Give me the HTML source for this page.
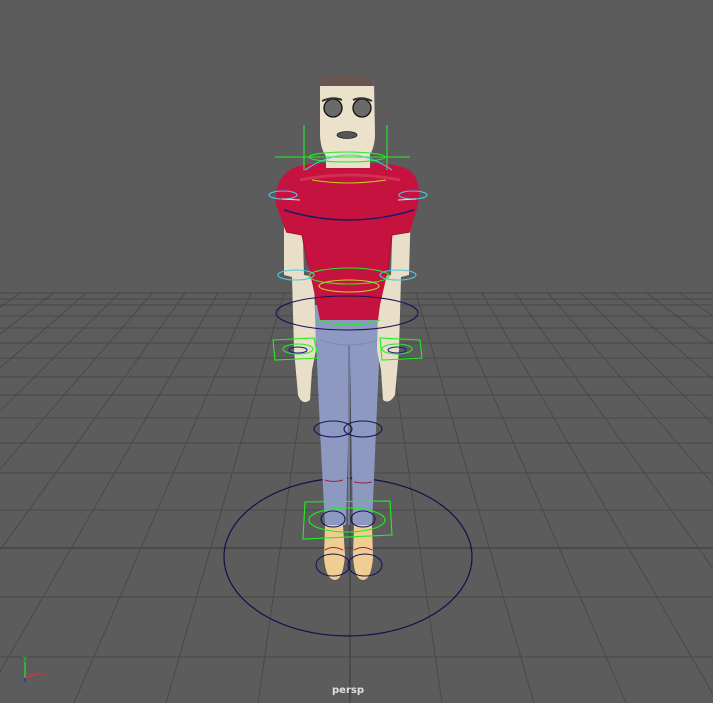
<!DOCTYPE html>
<html><head><meta charset="utf-8"><style>
html,body{margin:0;padding:0;background:#5c5c5c;width:713px;height:703px;overflow:hidden}
svg{display:block}
</style></head><body>
<svg width="713" height="703" viewBox="0 0 713 703" xmlns="http://www.w3.org/2000/svg">
<rect width="713" height="703" fill="#5c5c5c"/>
<defs><clipPath id="floor"><rect x="0" y="292" width="713" height="411"/></clipPath></defs>
<g clip-path="url(#floor)" stroke="#474747" stroke-width="0.9" fill="none">
<path d="M0 293H713M0 299H713M0 305H713M0 316H713M0 328H713M0 343H713M0 358H713M0 377H713M0 395H713M0 418H713M0 443H713M0 473H713M0 510H713M0 597H713M0 657H713"/>
<path d="M0 548H713" stroke="#404040" stroke-width="1.2"/>
<g>
<path d="M350 64L-662 703M350 64L-570 703M350 64L-478 703M350 64L-386 703M350 64L-294 703M350 64L-202 703M350 64L-110 703M350 64L-18 703M350 64L74 703M350 64L166 703M350 64L258 703"/>
<path d="M350 64L442 703M350 64L534 703M350 64L626 703M350 64L718 703M350 64L810 703M350 64L902 703M350 64L994 703M350 64L1086 703M350 64L1178 703M350 64L1270 703M350 64L1362 703"/>
<path d="M350 292V703" stroke="#404040" stroke-width="1.2"/>
</g>
</g>

<ellipse cx="348" cy="557" rx="124" ry="79" fill="none" stroke="#10104e" stroke-width="1.2"/>

<path d="M312 305 L383 305 L380 340 L376 430 L372 525 L353 525 L350 360 L346 525 L325 525 L320 430 L316 340 Z" fill="#8e99c2"/>
<path d="M349 345 V525" stroke="#6f7aa0" stroke-width="2"/>
<path d="M320 340 Q349 350 378 340" stroke="#7d88b0" fill="none"/>
<path d="M325 525 h18 l2 30 q-2 25 -10 25 q-9 0 -11 -22 z" fill="#f0cd93"/>
<path d="M354 525 h18 l1 33 q-2 22 -10 22 q-9 0 -10 -25 z" fill="#f0cd93"/>

<path d="M284 205 h18 l2 70 l10 2 l2 73 l-4 20 l-2 30 q-8 6 -12 -5 l-4 -45 l-2 -73 l-8 -2 z" fill="#e9dfc8"/>
<path d="M393 205 h18 l-2 70 l-8 2 l-2 73 l-4 45 q-6 10 -12 5 l-2 -30 l-4 -20 l2 -73 l12 -2 z" fill="#e9dfc8"/>

<path d="M290 170 Q300 163 330 163 L370 163 Q400 163 412 172 Q422 185 418 205 L410 232 L392 235 L388 270 L380 305 L378 320 L320 320 L316 300 L308 265 L302 235 L286 232 L276 205 Q274 180 290 170 Z" fill="#c5123f"/>
<path d="M286 232 L302 235 L308 265 M410 232 L392 235 L388 270" stroke="#a50e35" fill="none"/>
<path d="M300 180 Q349 170 400 180" stroke="#e24a6a" stroke-width="3" fill="none" opacity="0.5"/>

<rect x="326" y="150" width="44" height="18" fill="#e9dfc8"/>
<path d="M320 82 Q322 77 347 76 Q373 77 374 82 L375 135 Q374 165 347 166 Q321 165 320 135 Z" fill="#ece2cb"/>
<path d="M320 82 Q322 76 347 75 Q373 76 374 82 L374 86 L320 86 Z" fill="#6a5650"/>
<circle cx="333" cy="108" r="9" fill="#6a6a6a" stroke="#111" stroke-width="1.3"/>
<circle cx="362" cy="108" r="9" fill="#6a6a6a" stroke="#111" stroke-width="1.3"/>
<path d="M322 101 Q333 96 342 100 M353 100 Q362 96 372 101" stroke="#333" stroke-width="2" fill="none"/>
<ellipse cx="347" cy="135" rx="10" ry="3.5" fill="#555" stroke="#222" stroke-width="0.8"/>

<g fill="none" stroke-width="1.1">
<path d="M304 125V170M387 125V170M275 157H410" stroke="#22ee22"/>
<ellipse cx="347" cy="157" rx="38" ry="5" stroke="#22ee22"/>
<path d="M305 170 Q349 140 392 170" stroke="#3ad0e0"/>
<ellipse cx="283" cy="195" rx="14" ry="4" stroke="#49c8e8"/>
<ellipse cx="413" cy="195" rx="14" ry="4" stroke="#49c8e8"/>
<path d="M282 199 L300 200 M398 200 L416 199" stroke="#e0e0ff"/>
<path d="M284 210 Q349 230 414 210" stroke="#1a1a6a" stroke-width="1.5"/>
<path d="M312 180 Q349 186 386 180" stroke="#c8c820"/>
<ellipse cx="296" cy="275" rx="18" ry="5" stroke="#49c8e8"/>
<ellipse cx="398" cy="275" rx="18" ry="5" stroke="#49c8e8"/>
<ellipse cx="349" cy="276" rx="40" ry="8" stroke="#22ee22"/>
<ellipse cx="349" cy="286" rx="30" ry="6" stroke="#c8d820"/>
<ellipse cx="347" cy="313" rx="71" ry="17" stroke="#14145a"/>
<path d="M318 320 Q349 330 380 320" stroke="#22ee22"/>
<path d="M273 340 L314 338 L318 358 L275 360 Z M380 338 L420 340 L422 358 L382 360 Z" stroke="#22ee22"/>
<ellipse cx="298" cy="349" rx="15" ry="5" stroke="#22ee22"/>
<ellipse cx="397" cy="349" rx="15" ry="5" stroke="#22ee22"/>
<ellipse cx="298" cy="350" rx="9" ry="3" stroke="#1a1a8a"/>
<ellipse cx="397" cy="350" rx="9" ry="3" stroke="#1a1a8a"/>
<ellipse cx="333" cy="429" rx="19" ry="8" stroke="#14145a"/>
<ellipse cx="363" cy="429" rx="19" ry="8" stroke="#14145a"/>
<path d="M305 502 L390 501 L392 535 L303 539 Z" stroke="#22ee22"/>
<ellipse cx="347" cy="520" rx="38" ry="12" stroke="#22ee22"/>
<ellipse cx="333" cy="519" rx="12" ry="8" stroke="#14145a"/>
<ellipse cx="363" cy="519" rx="12" ry="8" stroke="#14145a"/>
<ellipse cx="333" cy="565" rx="17" ry="11" stroke="#14145a"/>
<ellipse cx="365" cy="565" rx="17" ry="11" stroke="#14145a"/>
<path d="M325 480 Q333 483 343 480 M354 482 Q363 484 372 482 M325 550 Q333 545 343 550 M354 550 Q363 545 372 550" stroke="#a0203c"/>
</g>

<g stroke-width="1.5" fill="none">
<path d="M25 678V662" stroke="#2ecc2e"/>
<path d="M25 678L40 673" stroke="#e03030"/>
<path d="M25 678V682" stroke="#2030e0"/>
</g>
<text x="25" y="660" font-family="Liberation Sans, sans-serif" font-size="7" fill="#2ecc2e" text-anchor="middle">y</text>
<text x="42" y="675" font-family="Liberation Sans, sans-serif" font-size="7" fill="#e03030">x</text>
<text x="348" y="693" font-family="DejaVu Sans, sans-serif" font-size="10" font-weight="bold" fill="#e0e0e0" text-anchor="middle">persp</text>
</svg>
</body></html>
